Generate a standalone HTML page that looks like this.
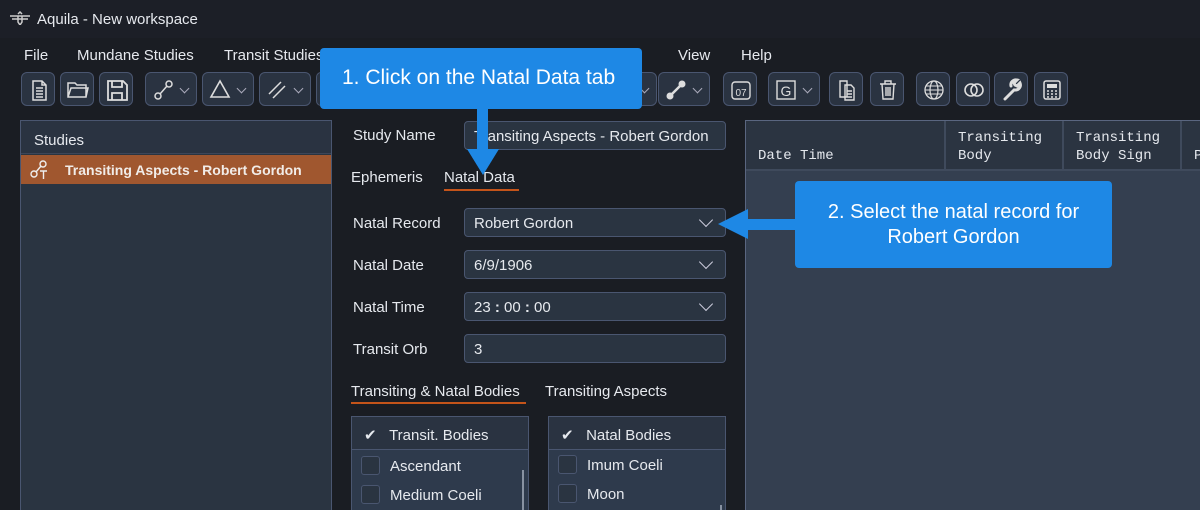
<!DOCTYPE html>
<html><head><meta charset="utf-8"><style>
*{box-sizing:border-box;margin:0;padding:0}
html,body{width:1200px;height:510px;overflow:hidden}
body{background:#1a1d23;font-family:"Liberation Sans","DejaVu Sans",sans-serif;color:#e6e9ee;position:relative;font-size:15px}
.a{position:absolute}
.title{left:0;top:0;width:1200px;height:38px;background:#1c1f27;}
.menu{top:47px;font-size:15px}
.btn{position:absolute;top:72px;height:34px;border:1px solid #4a5670;border-radius:6px;background:#2a3341}
.btn svg{position:absolute;left:0;top:0}
.chev{position:absolute;right:8px;top:12px;width:7px;height:7px;border-right:1.3px solid #aab;border-bottom:1.3px solid #aab;transform:rotate(45deg)}
.panel{background:#2a3441;border:1px solid #4a5670}
.lbl{left:353px;font-size:15px}
.inp{left:464px;width:262px;height:29px;background:#2a3441;border:1px solid #4a5670;border-radius:4px;padding:6px 9px;font-size:15px}
.dd::after{content:"";position:absolute;right:14px;top:6px;width:9px;height:9px;border-right:1.4px solid #ccd;border-bottom:1.4px solid #ccd;transform:rotate(45deg)}
.cb{width:19px;height:19px;border:1px solid #4a5670;border-radius:3px;background:#2a3441}
.mono{font-family:"Liberation Mono","DejaVu Sans Mono",monospace;font-size:14px;line-height:18px}
.call{background:#1e88e5;color:#fff;font-size:20px;border-radius:4px;text-align:center}
</style></head><body>
<div class="a title"></div>
<div class="a" style="left:10px;top:11px;width:20px;height:14px">
<svg width="20" height="14"><path d="M0 5h20M2 8h16M8 3l2-2 2 2M8 5v6l2 3 2-3V5" stroke="#ccc" stroke-width="1.5" fill="none"/></svg></div>
<div class="a" style="left:37px;top:11px;font-size:15px">Aquila - New workspace</div>

<div class="a menu" style="left:24px">File</div>
<div class="a menu" style="left:77px">Mundane Studies</div>
<div class="a menu" style="left:224px">Transit Studies</div>
<div class="a menu" style="left:636px">t</div>
<div class="a menu" style="left:678px">View</div>
<div class="a menu" style="left:741px">Help</div>

<div class="btn" style="left:21px;width:34px"><svg width="34" height="34"><path d="M11 8h9l4 4v15H11z M20 8v4h4 M14 15h7M14 18h7M14 21h7M14 24h7" stroke="#ddd" stroke-width="1.5" fill="none"/></svg></div>
<div class="btn" style="left:60px;width:34px"><svg width="34" height="34"><path d="M7 24V10h7l2 2h9v12z M7 24l3-9h17l-2 9" stroke="#ddd" stroke-width="1.5" fill="none"/></svg></div>
<div class="btn" style="left:99px;width:34px"><svg width="34" height="34"><path d="M8 8h15l4 4v15H8z M12 8v6h10V8 M12 27v-7h10v7" stroke="#ddd" stroke-width="1.8" fill="none"/></svg></div>
<div class="btn" style="left:145px;width:52px"><svg width="34" height="34"><circle cx="12" cy="23" r="3" stroke="#ddd" fill="none" stroke-width="1.5"/><circle cx="23" cy="11" r="3" stroke="#ddd" fill="none" stroke-width="1.5"/><path d="M14 21l7-8" stroke="#ddd" stroke-width="1.5"/></svg><span class="chev"></span></div>
<div class="btn" style="left:202px;width:52px"><svg width="34" height="34"><path d="M17 8l9 16H8z" stroke="#ddd" stroke-width="1.6" fill="none"/></svg><span class="chev"></span></div>
<div class="btn" style="left:259px;width:52px"><svg width="34" height="34"><path d="M9 21l12-12M13 25l12-12" stroke="#ddd" stroke-width="1.5"/></svg><span class="chev"></span></div>
<div class="btn" style="left:316px;width:10px"></div>
<div class="btn" style="left:612px;width:45px"><span class="chev"></span></div>
<div class="btn" style="left:658px;width:52px"><svg width="34" height="34"><circle cx="11" cy="23" r="3.5" fill="#ddd"/><circle cx="23" cy="11" r="3.5" fill="#ddd"/><path d="M12 22l10-10" stroke="#ddd" stroke-width="2.5"/></svg><span class="chev"></span></div>
<div class="btn" style="left:723px;width:34px"><svg width="34" height="34"><rect x="8" y="9" width="18" height="17" rx="3" stroke="#ddd" fill="none" stroke-width="1.4"/><text x="17" y="23" font-size="10" fill="#ddd" text-anchor="middle" font-family="Liberation Sans">07</text></svg></div>
<div class="btn" style="left:768px;width:52px"><svg width="34" height="34"><rect x="8" y="8" width="18" height="18" stroke="#ddd" fill="none" stroke-width="1.4"/><text x="17" y="23" font-size="14" fill="#ddd" text-anchor="middle" font-family="Liberation Sans">G</text></svg><span class="chev"></span></div>
<div class="btn" style="left:829px;width:34px"><svg width="34" height="34"><path d="M10 8h7v16h-7z M15 12h6l3 3v12h-9z M17 18h5M17 21h5M17 24h5" stroke="#ddd" stroke-width="1.4" fill="#2a3341"/></svg></div>
<div class="btn" style="left:870px;width:34px"><svg width="34" height="34"><path d="M9 11h16M14 11V8h6v3M11 11l1 15h10l1-15M15 14v9M17 14v9M19 14v9" stroke="#ddd" stroke-width="1.4" fill="none"/></svg></div>
<div class="btn" style="left:916px;width:34px"><svg width="34" height="34"><circle cx="17" cy="17" r="9" stroke="#ddd" fill="none" stroke-width="1.3"/><ellipse cx="17" cy="17" rx="4" ry="9" stroke="#ddd" fill="none" stroke-width="1.2"/><path d="M8 17h18M9 13h16M9 21h16" stroke="#ddd" stroke-width="1.1"/></svg></div>
<div class="btn" style="left:956px;width:34px"><svg width="34" height="34"><circle cx="14" cy="17" r="6" stroke="#ddd" fill="none" stroke-width="1.6"/><circle cx="20" cy="17" r="6" stroke="#ddd" fill="none" stroke-width="1.6"/></svg></div>
<div class="btn" style="left:994px;width:34px"><svg width="34" height="34"><path d="M10 26l9-9M20 17a5 5 0 0 0 5-7l-3 3-2-1-1-2 3-3a5 5 0 0 0-6 6" stroke="#ddd" stroke-width="3" fill="none" stroke-linecap="round"/></svg></div>
<div class="btn" style="left:1034px;width:34px"><svg width="34" height="34"><rect x="9" y="8" width="16" height="18" rx="2" stroke="#ddd" fill="none" stroke-width="1.5"/><rect x="12" y="11" width="10" height="4" fill="#ddd"/><path d="M12 18h10M12 21h10M12 24h10" stroke="#ddd" stroke-width="1.5" stroke-dasharray="2 2"/></svg></div>

<!-- studies panel -->
<div class="a panel" style="left:20px;top:120px;width:312px;height:400px;"></div>
<div class="a" style="left:21px;top:121px;width:310px;height:33px;background:#2a3341;border-bottom:1px solid #3d4658"></div>
<div class="a" style="left:34px;top:132px;font-size:15px">Studies</div>
<div class="a" style="left:21px;top:155px;width:310px;height:29px;background:#a0572f"></div>
<svg class="a" style="left:29px;top:159px" width="22" height="22"><circle cx="5" cy="15" r="3" stroke="#eee" fill="none" stroke-width="1.4"/><circle cx="14" cy="5" r="3" stroke="#eee" fill="none" stroke-width="1.4"/><path d="M7 13l5-6M11 12h7M14.5 12v8" stroke="#eee" stroke-width="1.4"/></svg>
<div class="a" style="left:65px;top:162px;font-weight:bold;font-size:14px;color:#f1ece8">Transiting Aspects - Robert Gordon</div>

<!-- form -->
<div class="a lbl" style="top:127px">Study Name</div>
<div class="a inp" style="top:121px">Transiting Aspects - Robert Gordon</div>
<div class="a" style="left:351px;top:169px;font-size:15px">Ephemeris</div>
<div class="a" style="left:444px;top:169px;font-size:15px">Natal Data</div>
<div class="a" style="left:444px;top:189px;width:75px;height:2px;background:#c4541a"></div>
<div class="a lbl" style="top:215px">Natal Record</div>
<div class="a inp dd" style="top:208px">Robert Gordon</div>
<div class="a lbl" style="top:257px">Natal Date</div>
<div class="a inp dd" style="top:250px">6/9/1906</div>
<div class="a lbl" style="top:299px">Natal Time</div>
<div class="a inp dd" style="top:292px">23 <b>:</b> 00 <b>:</b> 00</div>
<div class="a lbl" style="top:341px">Transit Orb</div>
<div class="a inp" style="top:334px">3</div>

<div class="a" style="left:351px;top:383px;font-size:15px">Transiting &amp; Natal Bodies</div>
<div class="a" style="left:351px;top:402px;width:175px;height:2px;background:#c4541a"></div>
<div class="a" style="left:545px;top:383px;font-size:15px">Transiting Aspects</div>

<div class="a panel" style="left:351px;top:416px;width:178px;height:100px;background:#2e3a4c"></div>
<div class="a" style="left:352px;top:417px;width:176px;height:33px;background:#2a3341;border-bottom:1px solid #4a5670"></div>
<div class="a" style="left:364px;top:426px;font-size:15px">✔&nbsp;&nbsp;&nbsp;Transit. Bodies</div>
<div class="a cb" style="left:361px;top:456px"></div><div class="a" style="left:390px;top:458px">Ascendant</div>
<div class="a cb" style="left:361px;top:485px"></div><div class="a" style="left:390px;top:487px">Medium Coeli</div>
<div class="a" style="left:522px;top:470px;width:2px;height:40px;background:#8892a2"></div>

<div class="a panel" style="left:548px;top:416px;width:178px;height:100px;background:#2e3a4c"></div>
<div class="a" style="left:549px;top:417px;width:176px;height:33px;background:#2a3341;border-bottom:1px solid #4a5670"></div>
<div class="a" style="left:561px;top:426px;font-size:15px">✔&nbsp;&nbsp;&nbsp;Natal Bodies</div>
<div class="a cb" style="left:558px;top:455px"></div><div class="a" style="left:587px;top:457px">Imum Coeli</div>
<div class="a cb" style="left:558px;top:484px"></div><div class="a" style="left:587px;top:486px">Moon</div>
<div class="a" style="left:720px;top:505px;width:2px;height:5px;background:#8892a2"></div>

<!-- table -->
<div class="a" style="left:745px;top:120px;width:460px;height:400px;background:#343f50;border:1px solid #5a6680"></div>
<div class="a" style="left:746px;top:121px;width:454px;height:50px;background:#2b3441;border-bottom:2px solid #3f4a5c"></div>
<div class="a" style="left:944px;top:121px;width:2px;height:50px;background:#3f4a5c"></div>
<div class="a" style="left:1062px;top:121px;width:2px;height:50px;background:#3f4a5c"></div>
<div class="a" style="left:1180px;top:121px;width:2px;height:50px;background:#3f4a5c"></div>
<div class="a mono" style="left:758px;top:147px">Date Time</div>
<div class="a mono" style="left:958px;top:129px">Transiting<br>Body</div>
<div class="a mono" style="left:1076px;top:129px">Transiting<br>Body Sign</div>
<div class="a mono" style="left:1194px;top:147px">P</div>

<!-- callouts -->
<div class="a call" style="left:320px;top:48px;width:322px;height:61px;padding-top:18px;text-align:left;padding-left:22px;font-size:21px">1. Click on the Natal Data tab</div>
<div class="a" style="left:477px;top:108px;width:11px;height:42px;background:#1e88e5"></div>
<svg class="a" style="left:467px;top:149px" width="32" height="26"><path d="M0 0h32L16 26z" fill="#1e88e5"/></svg>
<div class="a call" style="left:795px;top:181px;width:317px;height:87px;padding-top:19px;line-height:25px">2. Select the natal record for<br>Robert Gordon</div>
<div class="a" style="left:746px;top:219px;width:50px;height:11px;background:#1e88e5"></div>
<svg class="a" style="left:718px;top:209px" width="30" height="30"><path d="M30 0v30L0 15z" fill="#1e88e5"/></svg>
</body></html>
